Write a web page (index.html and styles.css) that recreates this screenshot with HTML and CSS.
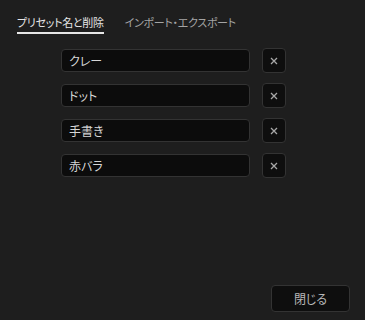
FILE: index.html
```html
<!DOCTYPE html>
<html>
<head>
  <meta charset="utf-8">
  <title>プリセット</title>
  <link rel="stylesheet" href="styles.css">
</head>
<body>
<div class="dialog">
  <div class="tabs">
    <div class="tab tab_active">プリセット名と削除</div>
    <div class="tab">インポート・エクスポート</div>
  </div>

  <div class="presets">
    <div class="preset">
      <input class="preset__name" type="text" value="クレー">
      <button class="preset__del"><svg width="8" height="8" viewBox="0 0 8 8"><path d="M1 1L7 7M7 1L1 7"/></svg></button>
    </div>
    <div class="preset">
      <input class="preset__name" type="text" value="ドット">
      <button class="preset__del"><svg width="8" height="8" viewBox="0 0 8 8"><path d="M1 1L7 7M7 1L1 7"/></svg></button>
    </div>
    <div class="preset">
      <input class="preset__name" type="text" value="手書き">
      <button class="preset__del"><svg width="8" height="8" viewBox="0 0 8 8"><path d="M1 1L7 7M7 1L1 7"/></svg></button>
    </div>
    <div class="preset">
      <input class="preset__name" type="text" value="赤バラ">
      <button class="preset__del"><svg width="8" height="8" viewBox="0 0 8 8"><path d="M1 1L7 7M7 1L1 7"/></svg></button>
    </div>
  </div>

  <div class="footer">
    <button class="btn">閉じる</button>
  </div>
</div>
</body>
</html>
```

FILE: styles.css
```css
html, body {
  margin: 0;
  height: 100%;
  background: #1e1e1e;
}

body {
  font-family: "Noto Sans CJK JP", "Noto Sans", sans-serif;
  font-size: 12px;
  font-feature-settings: "palt";
  color: #d6d6d6;
}

.dialog {
  height: 320px;
  display: flex;
  flex-direction: column;
  box-sizing: border-box;
}

.tabs {
  display: flex;
  gap: 21px;
  padding: 12px 0 0 17px;
}

.tab {
  color: #a4a4a4;
  font-size: 11px;
  letter-spacing: -0.3px;
  line-height: 20px;
  border-bottom: 2px solid transparent;
}

.tab_active {
  color: #e6e6e6;
  border-bottom-color: #e6e6e6;
}

.presets {
  display: flex;
  flex-direction: column;
  gap: 10px;
  padding: 14px 0 0 61px;
}

.preset {
  display: flex;
  align-items: center;
  gap: 12px;
}

.preset__name {
  width: 189px;
  height: 23px;
  box-sizing: border-box;
  margin: 0;
  padding: 0 7px;
  background: #0c0c0c;
  border: 1px solid #333;
  border-radius: 4px;
  color: #d6d6d6;
  font: inherit;
  outline: none;
}

.preset__del {
  width: 24px;
  height: 25px;
  margin: 0;
  padding: 0;
  display: flex;
  align-items: center;
  justify-content: center;
  background: #0e0e0e;
  border: 1px solid #333;
  border-radius: 4px;
}

.preset__del svg {
  stroke: #a8a8a8;
  stroke-width: 1.3;
}

.footer {
  margin-top: auto;
  display: flex;
  justify-content: flex-end;
  padding: 0 15px 8px 0;
}

.btn {
  width: 79px;
  height: 27px;
  margin: 0;
  background: #0e0e0e;
  border: 1px solid #333;
  border-radius: 4px;
  color: #b8b8b8;
  font: inherit;
  font-size: 12px;
}
```
